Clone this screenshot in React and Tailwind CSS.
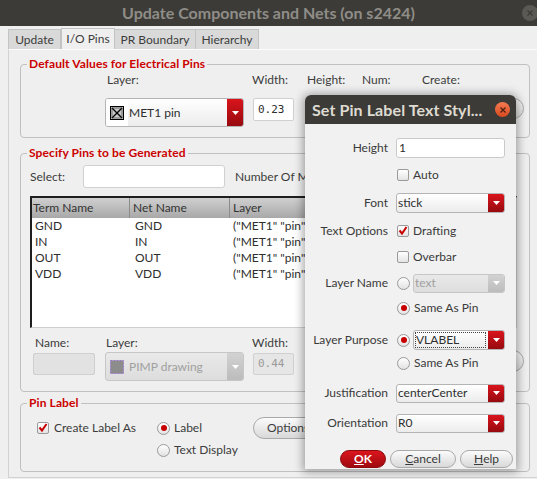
import React from "react";

const Tri = ({ color = "#ffffff" }) => (
  <svg width="7" height="4" viewBox="0 0 7 4">
    <path d="M0 0H7L3.5 4Z" fill={color} />
  </svg>
);

function Combo({ className = "", disabled = false, children }) {
  return (
    <div
      className={`flex items-stretch rounded-[3px] border overflow-hidden ${
        disabled
          ? "border-[#c6c6c6] bg-gradient-to-b from-[#e9e9e9] to-[#dddddd] text-[#a0a0a0]"
          : "border-[#b4b4b4] bg-gradient-to-b from-[#ffffff] to-[#ececec] text-[#2e2e2e]"
      } ${className}`}
    >
      <div className="flex-1 min-w-0 flex items-center overflow-hidden whitespace-nowrap">{children}</div>
      <div
        className={`w-[16px] shrink-0 flex items-center justify-center ${
          disabled ? "bg-gradient-to-b from-[#d2d2d2] to-[#bcbcbc]" : "bg-gradient-to-b from-[#da141c] to-[#970a0f]"
        }`}
      >
        <Tri />
      </div>
    </div>
  );
}

function Check({ checked }) {
  return (
    <span className="w-[12px] h-[12px] shrink-0 rounded-[2px] border border-[#9a9a9a] bg-gradient-to-b from-[#ffffff] to-[#e4e4e4] flex items-center justify-center">
      {checked && (
        <svg width="10" height="10" viewBox="0 0 10 10">
          <path d="M1.5 4.5 L4 7.5 L8.5 1" fill="none" stroke="#c80000" strokeWidth="2" />
        </svg>
      )}
    </span>
  );
}

function Radio({ checked }) {
  return (
    <span className="w-[13px] h-[13px] shrink-0 rounded-full border border-[#9a9a9a] bg-gradient-to-b from-[#ffffff] to-[#e2e2e2] flex items-center justify-center">
      {checked && <span className="w-[6px] h-[6px] rounded-full bg-[#c80000]" />}
    </span>
  );
}

function Tab({ w, active, children }) {
  return (
    <div
      className={`${w} flex items-center justify-center border border-b-0 border-[#c3c3c3] ${
        active ? "h-[21px] bg-[#efefef]" : "h-[20px] bg-[#d9d9d9] border-l-0 first:border-l"
      }`}
    >
      {children}
    </div>
  );
}

function Group({ title, className = "", children }) {
  return (
    <div className={`w-[510px] rounded-[4px] border border-[#c0c0c0] ${className}`}>
      <div className="-mt-[8px] ml-[6px] w-fit px-[2px] bg-[#efefef] text-[#cc0000] font-bold leading-[14px] tracking-[0.1px]">
        {title}
      </div>
      {children}
    </div>
  );
}

function MetIcon() {
  return (
    <svg width="14" height="14" viewBox="0 0 14 14" className="shrink-0">
      <rect x="0.5" y="0.5" width="13" height="13" fill="#c8c8c8" stroke="#000" />
      <path d="M2 2L12 12M12 2L2 12" stroke="#000" strokeWidth="1.4" />
      <rect x="2" y="2" width="10" height="10" fill="none" stroke="#333" strokeWidth="0.6" />
    </svg>
  );
}

function PimpIcon() {
  return (
    <svg width="14" height="14" viewBox="0 0 14 14" className="shrink-0">
      <rect x="0.5" y="0.5" width="13" height="13" fill="#8c8c8c" stroke="#9a78c8" strokeDasharray="2 1" />
    </svg>
  );
}

function DRow({ label, mt = "", children }) {
  return (
    <div className={`flex items-center h-[20px] ${mt}`}>
      <div className="w-[83px] text-right whitespace-nowrap">{label}</div>
      <div className="ml-[8px] w-[109px] h-full flex items-center">{children}</div>
    </div>
  );
}

function Dialog() {
  return (
    <div className="absolute left-[305px] top-[95px] w-[211px] h-[374px] rounded-t-[6px] bg-[#f1f1f1] shadow-[0_1px_10px_2px_rgba(0,0,0,0.35)] flex flex-col text-[#3a3a3a]">
      <div className="h-[29px] shrink-0 bg-[#3c3b37] rounded-t-[6px] flex items-center pl-[7px] pr-[6px]">
        <div className="flex-1 font-bold text-[16px] tracking-[0.1px] text-[#dfdbd2] whitespace-nowrap">
          Set Pin Label Text Styl...
        </div>
        <span className="w-[15px] h-[15px] shrink-0 rounded-full bg-gradient-to-b from-[#f47a50] to-[#d9491c] flex items-center justify-center">
          <svg width="6" height="6" viewBox="0 0 6 6">
            <path d="M0.5 0.5L5.5 5.5M5.5 0.5L0.5 5.5" stroke="#4a2010" strokeWidth="1.2" />
          </svg>
        </span>
      </div>
      <div className="pt-[14px] flex flex-col">
        <DRow label="Height">
          <div className="w-full h-[20px] bg-white border border-[#cacaca] rounded-[3px] pl-[2px] flex items-center text-[#2e2e2e]">
            1
          </div>
        </DRow>
        <DRow label="" mt="mt-[7px]">
          <div className="ml-[1px] flex items-center gap-[4px]">
            <Check />
            <span>Auto</span>
          </div>
        </DRow>
        <DRow label="Font" mt="mt-[8px]">
          <Combo className="w-full h-[20px]">
            <span className="pl-[1px]">stick</span>
          </Combo>
        </DRow>
        <DRow label="Text Options" mt="mt-[8px]">
          <div className="ml-[1px] flex items-center gap-[4px]">
            <Check checked />
            <span>Drafting</span>
          </div>
        </DRow>
        <DRow label="" mt="mt-[6px]">
          <div className="ml-[1px] flex items-center gap-[4px]">
            <Check />
            <span>Overbar</span>
          </div>
        </DRow>
        <DRow label="Layer Name" mt="mt-[6px]">
          <div className="ml-[1px] flex items-center gap-[3px] w-full">
            <Radio />
            <Combo disabled className="flex-1 h-[19px]">
              <span className="pl-[1px]">text</span>
            </Combo>
          </div>
        </DRow>
        <DRow label="" mt="mt-[5px]">
          <div className="ml-[1px] flex items-center gap-[4px]">
            <Radio checked />
            <span>Same As Pin</span>
          </div>
        </DRow>
        <DRow label="Layer Purpose" mt="mt-[12px]">
          <div className="ml-[1px] flex items-center gap-[3px] w-full">
            <Radio checked />
            <Combo className="flex-1 h-[20px]">
              <span className="ml-[1px] mr-[2px] flex-1 h-[16px] border border-dotted border-[#444] flex items-center">
                VLABEL
              </span>
            </Combo>
          </div>
        </DRow>
        <DRow label="" mt="mt-[3px]">
          <div className="ml-[1px] flex items-center gap-[4px]">
            <Radio />
            <span>Same As Pin</span>
          </div>
        </DRow>
        <DRow label="Justification" mt="mt-[10px]">
          <Combo className="w-full h-[19px]">
            <span className="pl-[1px]">centerCenter</span>
          </Combo>
        </DRow>
        <DRow label="Orientation" mt="mt-[10px]">
          <Combo className="w-full h-[19px]">
            <span className="pl-[1px]">R0</span>
          </Combo>
        </DRow>
        <div className="mt-[17px] flex pl-[35px] gap-[4px] h-[18px]">
          <div className="w-[46px] rounded-full border border-[#8a0a0e] bg-gradient-to-b from-[#dc151d] to-[#a00a10] text-white font-bold flex items-center justify-center">
            <span className="underline">O</span>K
          </div>
          <div className="w-[66px] rounded-full border border-[#a9a9a9] bg-gradient-to-b from-[#fbfbfb] to-[#d9d9d9] flex items-center justify-center">
            <span className="underline">C</span>ancel
          </div>
          <div className="w-[53px] rounded-full border border-[#a9a9a9] bg-gradient-to-b from-[#fbfbfb] to-[#d9d9d9] flex items-center justify-center">
            <span className="underline">H</span>elp
          </div>
        </div>
      </div>
    </div>
  );
}

const rows = [
  ["GND", "GND"],
  ["IN", "IN"],
  ["OUT", "OUT"],
  ["VDD", "VDD"],
];

export default function App() {
  return (
    <div className="relative w-[537px] h-[479px] overflow-hidden bg-[#efefef] font-['Lato',sans-serif] text-[12px] leading-[16px] text-[#3c3c3c]">
      {/* Title bar */}
      <div className="h-[26px] bg-[#3c3b37] grid grid-cols-[30px_1fr_30px] items-center">
        <div />
        <div className="text-center font-bold text-[16px] text-[#8f8d88] whitespace-nowrap">
          Update Components and Nets (on s2424)
        </div>
        <div className="flex items-center pl-[15px]">
          <span className="w-[16px] h-[16px] shrink-0 rounded-full bg-[#5a5954] flex items-center justify-center">
            <svg width="6" height="6" viewBox="0 0 6 6">
              <path d="M0.5 0.5L5.5 5.5M5.5 0.5L0.5 5.5" stroke="#3c3b37" strokeWidth="1.3" />
            </svg>
          </span>
        </div>
      </div>

      {/* Tabs */}
      <div className="h-[23px] flex items-end pl-[8px]">
        <Tab w="w-[53px]">Update</Tab>
        <Tab w="w-[54px]" active>
          I/O Pins
        </Tab>
        <Tab w="w-[81px]">PR Boundary</Tab>
        <Tab w="w-[63px]">Hierarchy</Tab>
      </div>

      {/* Panel */}
      <div className="ml-[8px] h-[429px] border-l border-b border-t border-l-[#d2d2d2] border-b-[#d2d2d2] border-t-[#fbfbfb] pl-[11px] pt-[14px]">
        {/* Group 1 */}
        <Group title="Default Values for Electrical Pins" className="h-[74px]">
          <div className="flex mt-[1px] h-[16px]">
            <div className="w-[86px]" />
            <div className="w-[145px]">Layer:</div>
            <div className="w-[55px]">Width:</div>
            <div className="w-[55px]">Height:</div>
            <div className="w-[60px]">Num:</div>
            <div>Create:</div>
          </div>
          <div className="flex items-start mt-[10px]">
            <Combo className="ml-[84px] w-[139px] h-[29px]">
              <div className="h-full w-[22px] flex items-center justify-center bg-white">
                <MetIcon />
              </div>
              <span className="pl-[1px]">MET1 pin</span>
            </Combo>
            <div className="ml-[9px] w-[41px] h-[23px] bg-white border border-[#d0d0d0] rounded-[2px] flex items-center pl-[4px] font-['DejaVu_Sans_Mono',monospace] text-[11px] text-[#2e2e2e]">
              0.23
            </div>
            <div className="ml-[13px] w-[41px] h-[23px] bg-white border border-[#d0d0d0] rounded-[2px]" />
            <div className="ml-[14px] w-[41px] h-[23px] bg-white border border-[#d0d0d0] rounded-[2px]" />
            <div className="ml-auto mr-[5px] w-[60px] h-[21px] rounded-full border border-[#a9a9a9] bg-gradient-to-b from-[#fbfbfb] to-[#d9d9d9]" />
          </div>
        </Group>

        {/* Group 2 */}
        <Group title="Specify Pins to be Generated" className="mt-[15px] h-[239px]">
          <div className="flex items-center mt-[5px] h-[23px]">
            <div className="ml-[9px] w-[53px]">Select:</div>
            <div className="w-[142px] h-[23px] bg-white border border-[#d0d0d0] rounded-[3px]" />
            <div className="ml-[10px] whitespace-nowrap">Number Of Matches:</div>
          </div>
          <div className="ml-[9px] mt-[8px] w-[487px] h-[132px] bg-white border-t-2 border-l-2 border-r border-b border-t-[#1e1e1e] border-l-[#1e1e1e] border-r-[#cfcfcf] border-b-[#cfcfcf]">
            <div className="grid grid-cols-[98px_100px_1fr] h-[20px] bg-gradient-to-b from-[#d0d0d0] to-[#a8a8a8] text-[#333]">
              <div className="pl-[1px] border-r border-[#8c8c8c] flex items-center">Term Name</div>
              <div className="pl-[3px] border-r border-[#8c8c8c] flex items-center">Net Name</div>
              <div className="pl-[3px] flex items-center">Layer</div>
            </div>
            {rows.map(([t, n]) => (
              <div key={t} className="grid grid-cols-[98px_100px_1fr] h-[16px] items-center text-[#2e2e2e]">
                <div className="pl-[3px]">{t}</div>
                <div className="pl-[5px]">{n}</div>
                <div className="pl-[3px] whitespace-nowrap">("MET1" "pin")</div>
              </div>
            ))}
          </div>
          <div className="flex mt-[7px] h-[16px]">
            <div className="ml-[14px] w-[71px]">Name:</div>
            <div className="w-[146px]">Layer:</div>
            <div>Width:</div>
          </div>
          <div className="flex items-start mt-[1px]">
            <div className="ml-[12px] mt-[1px] w-[62px] h-[22px] bg-[#e2e2e2] border border-[#cfcfcf] rounded-[2px]" />
            <Combo disabled className="ml-[10px] w-[139px] h-[29px]">
              <div className="h-full w-[22px] flex items-center justify-center">
                <PimpIcon />
              </div>
              <span className="pl-[1px]">PIMP drawing</span>
            </Combo>
            <div className="ml-[9px] mt-[1px] w-[41px] h-[22px] bg-[#e6e6e6] border border-[#d0d0d0] rounded-[2px] flex items-center pl-[4px] font-['DejaVu_Sans_Mono',monospace] text-[11px] text-[#9a9a9a]">
              0.44
            </div>
            <div className="ml-auto mr-[5px] mt-[-2px] w-[60px] h-[22px] rounded-full border border-[#a9a9a9] bg-gradient-to-b from-[#fbfbfb] to-[#d9d9d9]" />
          </div>
        </Group>

        {/* Group 3 */}
        <Group title="Pin Label" className="mt-[11px] h-[69px]">
          <div className="mt-[7px] ml-[16px] grid grid-cols-[120px_96px_1fr] grid-rows-[22px_22px] items-center">
            <div className="flex items-center gap-[5px]">
              <Check checked />
              <span>Create Label As</span>
            </div>
            <div className="flex items-center gap-[4px]">
              <Radio checked />
              <span>Label</span>
            </div>
            <div>
              <div className="w-[80px] h-[22px] rounded-full border border-[#a9a9a9] bg-gradient-to-b from-[#fbfbfb] to-[#d9d9d9] flex items-center pl-[13px]">
                Options
              </div>
            </div>
            <div />
            <div className="flex items-center gap-[4px]">
              <Radio />
              <span>Text Display</span>
            </div>
            <div />
          </div>
        </Group>
      </div>

      <Dialog />
    </div>
  );
}
